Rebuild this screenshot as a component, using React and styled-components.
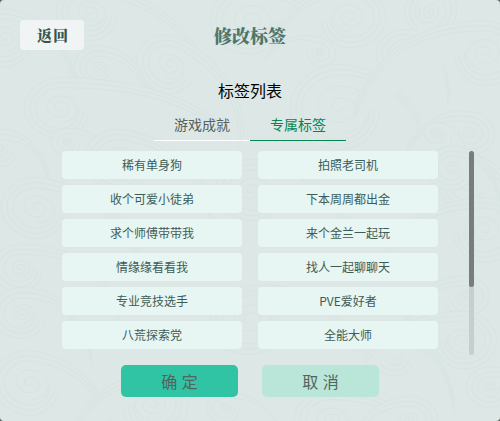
import styled, { createGlobalStyle } from "styled-components";

const tabs = ["游戏成就", "专属标签"];

const tags = [
    "稀有单身狗", "拍照老司机",
    "收个可爱小徒弟", "下本周周都出金",
    "求个师傅带带我", "来个金兰一起玩",
    "情缘缘看看我", "找人一起聊聊天",
    "专业竞技选手", "PVE爱好者",
    "八荒探索党", "全能大师",
];

// x, y, head radius, tail length, tail drop, rotation, direction
const swirls = [
    [90, 12, 34, 110, 50, 10, 1],
    [250, 20, 40, 90, 60, 0, 1],
    [350, 17, 36, 80, 60, 0, -1],
    [430, 12, 30, 110, 70, 120, 1],
    [5, 38, 34, 80, 70, 10, 1],
    [170, 65, 34, 100, 60, 30, 1],
    [406, 55, 30, 50, 60, 10, 1],
    [320, 52, 16, 50, 40, 20, -1],
    [100, 68, 26, 60, 60, 10, 1],
    [340, 107, 50, 80, 60, 0, 1],
    [485, 53, 38, 130, 90, 0, -1],
    [60, 108, 36, 170, 60, 0, 1],
    [470, 183, 34, 60, 60, 20, 1],
    [470, 133, 25, 60, 50, 10, -1],
    [436, 133, 12, 30, 30, 0, 1],
    [0, 148, 22, 50, 50, 0, 1],
    [67, 142, 16, 50, 30, 0, 1],
    [120, 160, 36, 100, 70, 10, 1],
    [252, 190, 36, 100, 80, 0, 1],
    [37, 208, 36, 120, 80, 10, 1],
    [452, 168, 26, 50, 60, 0, 1],
    [484, 230, 38, 100, 60, 0, -1],
    [20, 268, 28, 100, 70, 0, 1],
    [22, 313, 30, 70, 70, 0, 1],
    [250, 320, 40, 100, 80, -10, 1],
    [465, 296, 24, 60, 50, 0, -1],
    [395, 355, 24, 60, 70, 0, 1],
    [463, 340, 34, 100, 50, 0, -1],
    [490, 387, 24, 60, 50, 0, 1],
    [30, 383, 38, 90, 70, 10, 1],
    [152, 405, 36, 80, 60, 0, -1],
    [225, 408, 18, 60, 50, 0, 1],
    [330, 420, 36, 100, 50, 0, 1],
    [410, 420, 28, 60, 50, 0, -1],
];

function spiral(radius) {
    const end = Math.PI * 4.5;
    let path = "";
    for (let a = 0; a <= end; a += 0.2) {
        const r = 1 + (a / end) * radius;
        path += `${path ? "L" : "M"}${(r * Math.cos(a)).toFixed(1)} ${(r * 0.8 * Math.sin(a)).toFixed(1)}`;
    }
    return path;
}

function wave(r, tail, drop) {
    const h = r * 0.85;
    return `M${tail} ${drop - r} C${tail * 0.8} ${-h * 0.4} ${tail * 0.4} ${-h} 0 ${-h}
        C${-r * 0.6} ${-h} ${-r} ${-h * 0.45} ${-r} 0
        C${-r} ${h * 0.6} ${-r * 0.5} ${h} 0 ${h}
        C${r * 0.5} ${h} ${r * 0.8} ${h * 0.5} ${r * 0.8} 0`;
}

function Swirl({ x, y, radius, tail, drop, angle, direction }) {
    const rings = [0, 6, 12].filter((inset) => radius - inset > 9);
    const core = radius - rings.length * 6;
    return (
        <g transform={`translate(${x} ${y}) rotate(${angle}) scale(${direction} 1)`}>
            {rings.map((inset) => (
                <path key={inset} d={wave(radius - inset, tail, drop)} />
            ))}
            <path d={spiral(core)} fill="none" />
        </g>
    );
}

function Pattern() {
    return (
        <PatternSvg viewBox="0 0 500 421" aria-hidden="true">
            {swirls.map(([x, y, radius, tail, drop, angle, direction]) => (
                <Swirl
                    key={`${x}-${y}`}
                    x={x}
                    y={y}
                    radius={radius}
                    tail={tail}
                    drop={drop}
                    angle={angle}
                    direction={direction}
                />
            ))}
        </PatternSvg>
    );
}

function App() {
    return (
        <>
            <GlobalStyle />
            <Backdrop>
                <Dialog>
                    <Pattern />
                    <Header>
                        <BackButton>返回</BackButton>
                        <Title>修改标签</Title>
                    </Header>
                    <ListTitle>标签列表</ListTitle>
                    <Tabs>
                        {tabs.map((tab, i) => (
                            <Tab key={tab} $active={i === 1}>{tab}</Tab>
                        ))}
                    </Tabs>
                    <ListArea>
                        <TagGrid>
                            {tags.map((tag) => (
                                <Tag key={tag}>{tag}</Tag>
                            ))}
                        </TagGrid>
                        <ScrollTrack>
                            <ScrollThumb />
                        </ScrollTrack>
                    </ListArea>
                    <Actions>
                        <ActionButton $primary>确 定</ActionButton>
                        <ActionButton>取 消</ActionButton>
                    </Actions>
                </Dialog>
            </Backdrop>
        </>
    );
}

export default App;

const GlobalStyle = createGlobalStyle`
    * {
        box-sizing: border-box;
    }
    body {
        margin: 0;
        font-family: "Noto Sans CJK SC", sans-serif;
    }
    button {
        display: flex;
        justify-content: center;
        align-items: center;
        padding: 0;
        border: none;
        font-family: inherit;
        white-space: pre;
    }
`;

const Backdrop = styled.div`
    width: 500px;
    height: 421px;
    background: #59625f;
`;

const Dialog = styled.main`
    position: relative;
    isolation: isolate;
    display: flex;
    flex-direction: column;
    height: 100%;
    overflow: hidden;
    border-radius: 4px;
    background: #dde8e6;
`;

const PatternSvg = styled.svg`
    position: absolute;
    inset: 0;
    z-index: -1;
    width: 100%;
    height: 100%;
    fill: #dde8e6;
    stroke: #d7e4e1;
    stroke-width: 1.1;
`;

const Header = styled.header`
    display: grid;
    grid-template-columns: 64px 1fr 64px;
    height: 50px;
    padding: 20px 20px 0;
`;

const BackButton = styled.button`
    height: 30px;
    padding: 0 0 2px 2px;
    border-radius: 4px;
    background: #f0f4f5;
    color: #36564f;
    font-family: "Noto Serif CJK SC", "Noto Sans CJK SC", serif;
    font-size: 15px;
    font-weight: 900;
    letter-spacing: 1px;
`;

const Title = styled.h1`
    margin: 0;
    color: #50766b;
    font-family: "Noto Serif CJK SC", "Noto Sans CJK SC", serif;
    font-size: 18px;
    font-weight: 900;
    line-height: 30px;
    text-align: center;
`;

const ListTitle = styled.h2`
    margin: 28px 0 0;
    color: #000;
    font-size: 16px;
    font-weight: 400;
    line-height: 24px;
    text-align: center;
`;

const Tabs = styled.nav`
    display: flex;
    justify-content: center;
    height: 39px;
    padding-top: 8px;
`;

const Tab = styled.button`
    width: 96px;
    height: 31px;
    padding-bottom: 2px;
    border-bottom: 1px solid ${({ $active }) => ($active ? "#078453" : "#fff")};
    background: none;
    color: ${({ $active }) => ($active ? "#078453" : "#56605e")};
    font-size: 14px;
`;

const ListArea = styled.section`
    display: flex;
    justify-content: space-between;
    height: 204px;
    margin: 10px 26px 0 62px;
`;

const TagGrid = styled.div`
    display: grid;
    grid-template-columns: 180px 180px;
    grid-auto-rows: 28px;
    gap: 6px 16px;
`;

const Tag = styled.button`
    padding-bottom: 1px;
    border-radius: 4px;
    background: #e7f5f3;
    color: #3d5c55;
    font-size: 12px;
`;

const ScrollTrack = styled.div`
    width: 5px;
    height: 204px;
    border-radius: 3px;
    background: #c7cfce;
`;

const ScrollThumb = styled.div`
    height: 136px;
    border-radius: 3px;
    background: #777d7c;
`;

const Actions = styled.footer`
    display: flex;
    justify-content: center;
    gap: 24px;
    padding-top: 10px;
`;

const ActionButton = styled.button`
    width: 117px;
    height: 32px;
    border-radius: 5px;
    background: ${({ $primary }) => ($primary ? "#30c3a4" : "#b9e6d8")};
    color: #506560;
    font-size: 16px;
    word-spacing: 1px;
`;
